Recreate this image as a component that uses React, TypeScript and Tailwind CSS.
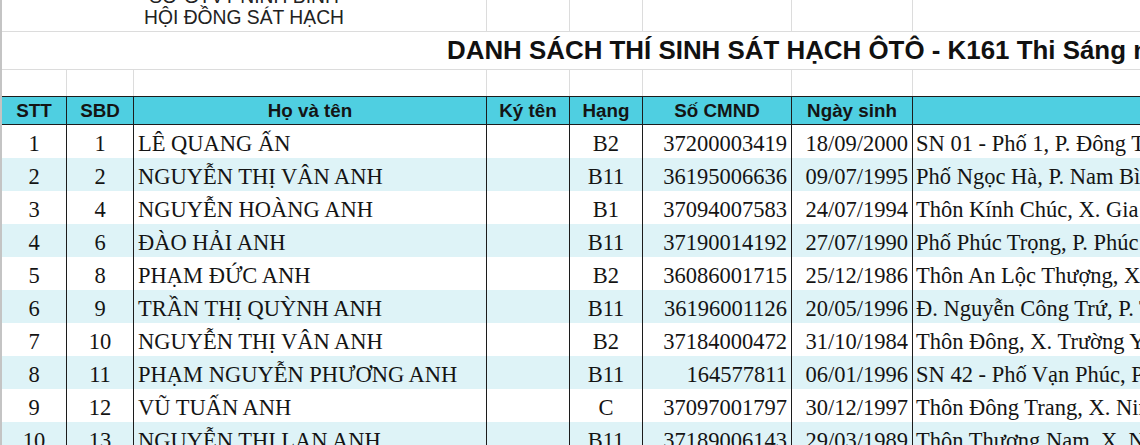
import React from "react";

const GRID = "grid grid-cols-[65px_67px_353px_83px_73px_149px_121px_1fr]";

const rows: [string, string, string, string, string, string, string][] = [
  ["1", "1", "LÊ QUANG ẤN", "B2", "37200003419", "18/09/2000", "SN 01 - Phố 1, P. Đông Thành, TP. Ninh Bình"],
  ["2", "2", "NGUYỄN THỊ VÂN ANH", "B11", "36195006636", "09/07/1995", "Phố Ngọc Hà, P. Nam Bình, TP. Ninh Bình"],
  ["3", "4", "NGUYỄN HOÀNG ANH", "B1", "37094007583", "24/07/1994", "Thôn Kính Chúc, X. Gia Tường, H. Nho Quan"],
  ["4", "6", "ĐÀO HẢI ANH", "B11", "37190014192", "27/07/1990", "Phố Phúc Trọng, P. Phúc Thành, TP. Ninh Bình"],
  ["5", "8", "PHẠM ĐỨC ANH", "B2", "36086001715", "25/12/1986", "Thôn An Lộc Thượng, X. Khánh Thiện"],
  ["6", "9", "TRẦN THỊ QUỲNH ANH", "B11", "36196001126", "20/05/1996", "Đ. Nguyễn Công Trứ, P. Tân Thành"],
  ["7", "10", "NGUYỄN THỊ VÂN ANH", "B2", "37184000472", "31/10/1984", "Thôn Đông, X. Trường Yên, H. Hoa Lư"],
  ["8", "11", "PHẠM NGUYỄN PHƯƠNG ANH", "B11", "164577811", "06/01/1996", "SN 42 - Phố Vạn Phúc, P. Vân Giang"],
  ["9", "12", "VŨ TUẤN ANH", "C", "37097001797", "30/12/1997", "Thôn Đông Trang, X. Ninh Vân"],
  ["10", "13", "NGUYỄN THỊ LAN ANH", "B11", "37189006143", "29/03/1989", "Thôn Thượng Nam, X. Ninh Vân"],
];

const headers = ["STT", "SBD", "Họ và tên", "Ký tên", "Hạng", "Số CMND", "Ngày sinh", ""];

export default function App() {
  return (
    <div className="w-[1140px] h-[445px] overflow-hidden bg-white border-l-2 border-[#c4c4c4] text-[#141414]">
      {/* Row 1: organisation */}
      <div className={`${GRID} h-[32px] border-b border-[#dcdcdc]`}>
        <div className="col-span-3 border-r border-[#dcdcdc] flex flex-col justify-end items-center pb-[3px] overflow-hidden font-['Liberation_Sans',Arial,sans-serif] text-[19.3px] leading-[23px] text-[#222]">
          <div className="whitespace-nowrap">SỞ GTVT NINH BÌNH</div>
          <div className="whitespace-nowrap leading-[20px]">HỘI ĐỒNG SÁT HẠCH</div>
        </div>
        <div className="border-r border-[#dcdcdc]" />
        <div className="border-r border-[#dcdcdc]" />
        <div className="border-r border-[#dcdcdc]" />
        <div className="border-r border-[#dcdcdc]" />
        <div />
      </div>

      {/* Row 2: title */}
      <div className="h-[38px] border-b border-[#dcdcdc] flex items-center pl-[445px] overflow-hidden">
        <div className="whitespace-nowrap font-['Liberation_Sans',Arial,sans-serif] font-bold text-[25.9px] leading-none text-[#111]">
          DANH SÁCH THÍ SINH SÁT HẠCH ÔTÔ - K161 Thi Sáng ngày 23/04/2018
        </div>
      </div>

      {/* Row 3: empty */}
      <div className={`${GRID} h-[26px]`}>
        <div className="border-r border-[#dcdcdc]" />
        <div className="border-r border-[#dcdcdc]" />
        <div className="border-r border-[#dcdcdc]" />
        <div className="border-r border-[#dcdcdc]" />
        <div className="border-r border-[#dcdcdc]" />
        <div className="border-r border-[#dcdcdc]" />
        <div className="border-r border-[#dcdcdc]" />
        <div />
      </div>

      {/* Header */}
      <div className={`${GRID} h-[29px] bg-[#4fcfe1] border-y border-[#1c1c1c] font-['Liberation_Sans',Arial,sans-serif] font-bold text-[18.8px] text-[#141414]`}>
        {headers.map((h, i) => (
          <div
            key={i}
            className={`flex items-center justify-center whitespace-nowrap ${i < 7 ? "border-r border-[#1c1c1c]" : ""}`}
          >
            {h}
          </div>
        ))}
      </div>

      {/* Body */}
      <div className="font-['Liberation_Serif','Times_New_Roman',serif] text-[22.5px] text-[#141414]">
        {rows.map((r, idx) => (
          <div
            key={idx}
            className={`${GRID} h-[33px] ${idx % 2 === 1 ? "bg-[#def3f7]" : "bg-white"}`}
          >
            <div className="flex items-center justify-center pt-[2px] border-r border-[#1c1c1c]">{r[0]}</div>
            <div className="flex items-center justify-center pt-[2px] border-r border-[#1c1c1c]">{r[1]}</div>
            <div className="flex items-center pl-[4px] pt-[2px] whitespace-nowrap border-r border-[#1c1c1c]">{r[2]}</div>
            <div className="border-r border-[#1c1c1c]" />
            <div className="flex items-center justify-center pt-[2px] border-r border-[#1c1c1c]">{r[3]}</div>
            <div className="flex items-center justify-end pr-[4px] pt-[2px] border-r border-[#1c1c1c]">{r[4]}</div>
            <div className="flex items-center justify-end pr-[4px] pt-[2px] border-r border-[#1c1c1c]">{r[5]}</div>
            <div className="flex items-center pl-[3px] pt-[2px] whitespace-nowrap overflow-hidden">{r[6]}</div>
          </div>
        ))}
      </div>
    </div>
  );
}
